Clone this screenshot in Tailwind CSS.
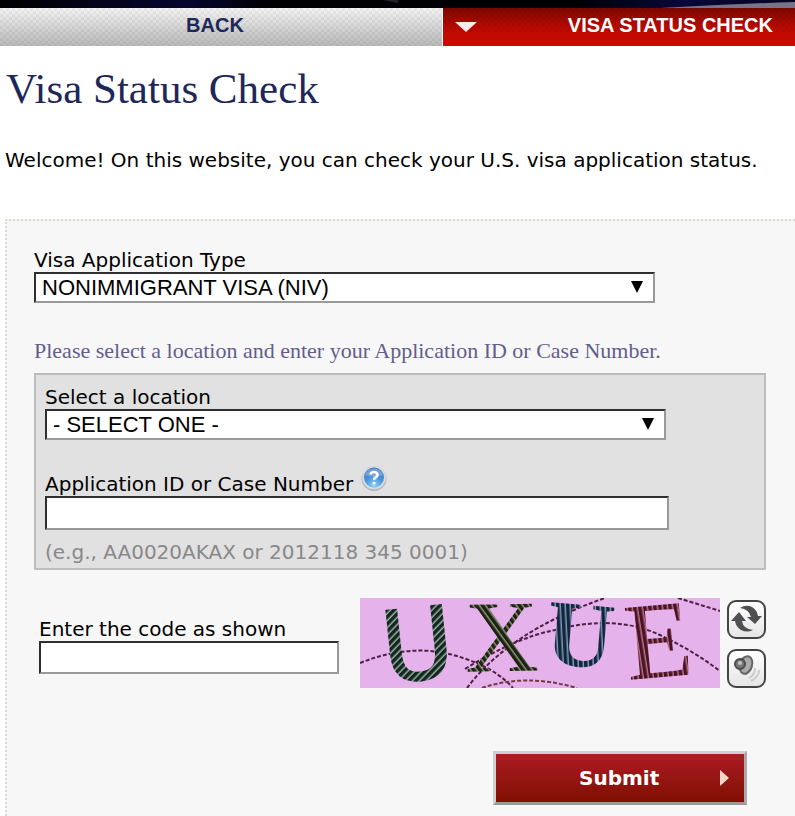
<!DOCTYPE html>
<html lang="en">
<head>
    <meta charset="UTF-8">
    <meta name="viewport" content="width=device-width, initial-scale=1.0">
    <title>Visa Status Check</title>
    <script src="https://cdn.jsdelivr.net/npm/@tailwindcss/browser@4"></script>
</head>
<body class="flex min-h-screen flex-col overflow-x-hidden bg-white font-['Verdana','DejaVu_Sans',sans-serif] text-[20px] leading-6 text-black">
    <header>
        <!-- bottom edge of the banner -->
        <svg class="block h-2 w-full" viewBox="0 0 795 8" preserveAspectRatio="none" aria-hidden="true">
            <defs>
                <linearGradient id="night">
                    <stop offset="0" stop-color="#000"/>
                    <stop offset=".12" stop-color="#03031a"/>
                    <stop offset=".24" stop-color="#050530"/>
                    <stop offset=".33" stop-color="#000005"/>
                    <stop offset=".72" stop-color="#000005"/>
                    <stop offset=".86" stop-color="#08083a"/>
                    <stop offset="1" stop-color="#050520"/>
                </linearGradient>
            </defs>
            <rect width="795" height="8" fill="url(#night)"/>
            <path d="M660 8Q730 4 795 2V8Z" fill="#77748a"/>
            <path d="M383 0H398V3Z" fill="#22262c"/>
        </svg>
        <nav class="grid grid-cols-[443fr_352fr] font-['Liberation_Sans',Arial,sans-serif] text-[20px] font-bold">
            <a href="#" class="relative block h-[38px] border-r border-white bg-linear-to-b from-[#f4f4f4] to-[#b9b9b9] pt-[5px] pr-3 text-center text-[#1d2758]">
                <svg class="absolute inset-0 h-full w-full" aria-hidden="true">
                    <defs>
                        <pattern id="mesh" width="6" height="6" patternUnits="userSpaceOnUse">
                            <path d="M0 0h3v3h3v3H3V3H0z" fill="#000" fill-opacity=".05"/>
                        </pattern>
                    </defs>
                    <rect width="100%" height="100%" fill="url(#mesh)"/>
                </svg>
                <span class="relative">BACK</span>
            </a>
            <a href="#" class="relative flex h-[38px] items-start justify-between bg-linear-to-b from-[#7d0800] via-[#b90a00] via-50% to-[#cc0a00] pt-[5px] pr-[22px] pl-3 text-white">
                <svg class="absolute inset-0 h-full w-full" aria-hidden="true"><rect width="100%" height="24" fill="url(#mesh)"/></svg>
                <svg class="relative mt-[9px] h-[10px] w-[22px]" viewBox="0 0 22 10" aria-hidden="true"><path d="M0 0H22L11 10Z" fill="#fff" fill-opacity=".92"/></svg>
                <span class="relative">VISA STATUS CHECK</span>
            </a>
        </nav>
    </header>

    <h1 class="mt-[18px] pl-[6px] font-['Liberation_Serif','Times_New_Roman',serif] text-[43px] leading-[50px] text-[#1d2758]">Visa Status Check</h1>
    <p class="mt-[34px] pl-[5px]">Welcome! On this website, you can check your U.S. visa application status.</p>

    <form class="mt-[47px] ml-[5px] flex-1 border-t-2 border-l-2 border-dotted border-[#dcdcd4] bg-[#f7f7f7] pt-[27px] pr-[29px] pb-[11px] pl-[27px]">
        <label for="visaType" class="block">Visa Application Type</label>
        <div class="relative w-[621px] max-w-full">
            <select id="visaType" class="block h-[31px] w-full appearance-none border-2 border-t-[#2f2f2f] border-r-[#999] border-b-[#999] border-l-[#2f2f2f] bg-white pl-[6px] font-['Liberation_Sans',Arial,sans-serif] text-[22px] leading-[26px]">
                <option>NONIMMIGRANT VISA (NIV)</option>
                <option>IMMIGRANT VISA (IV)</option>
            </select>
            <svg class="pointer-events-none absolute top-[9px] right-3 h-3 w-3" viewBox="0 0 12 12" aria-hidden="true"><path d="M0 0H12L6 12Z"/></svg>
        </div>

        <p class="mt-[34px] font-['Liberation_Serif','Times_New_Roman',serif] text-[22px] leading-7 text-[#625d8c]">Please select a location and enter your Application ID or Case Number.</p>

        <div class="mt-2 border-2 border-[#bdbdbd] bg-[#e1e1e1] px-[9px] pt-[10px] pb-1">
            <label for="location" class="block">Select a location</label>
            <div class="relative w-[621px] max-w-full">
                <select id="location" class="block h-[31px] w-full appearance-none border-2 border-t-[#2f2f2f] border-r-[#999] border-b-[#999] border-l-[#2f2f2f] bg-white pl-[6px] font-['Liberation_Sans',Arial,sans-serif] text-[22px] leading-[26px]">
                    <option>- SELECT ONE -</option>
                </select>
                <svg class="pointer-events-none absolute top-[9px] right-3 h-3 w-3" viewBox="0 0 12 12" aria-hidden="true"><path d="M0 0H12L6 12Z"/></svg>
            </div>

            <div class="mt-[25px] flex items-start gap-2">
                <label for="caseNumber" class="mt-[7px] block">Application ID or Case Number</label>
                <button type="button" aria-label="Help">
                    <svg class="block h-[26px] w-[26px]" viewBox="0 0 26 26" aria-hidden="true">
                        <defs>
                            <radialGradient id="ball" cx=".5" cy=".9" r=".9">
                                <stop offset="0" stop-color="#8fd0ff"/>
                                <stop offset=".5" stop-color="#4b92da"/>
                                <stop offset="1" stop-color="#4376bd"/>
                            </radialGradient>
                        </defs>
                        <circle cx="13" cy="13.5" r="12.5" fill="#aeb0b3"/>
                        <circle cx="13" cy="12.5" r="12" fill="#d5dadd"/>
                        <circle cx="13" cy="12.5" r="10" fill="url(#ball)"/>
                        <path d="M4 10A9.500 9.500 0 0 1 22 10Q13 13 4 10Z" fill="#fff" fill-opacity=".25"/>
                        <path d="M9.500 9.500Q10 7 13 7T16.500 9.800Q16.500 11.500 14.500 12.500Q13 13.300 13 14.800" fill="none" stroke="#fff" stroke-width="2.600"/>
                        <circle cx="13" cy="18" r="1.600" fill="#fff"/>
                    </svg>
                </button>
            </div>
            <input id="caseNumber" type="text" class="block h-[34px] w-[624px] max-w-full border-2 border-t-[#2f2f2f] border-r-[#999] border-b-[#999] border-l-[#2f2f2f] bg-white px-1">
            <p class="mt-[10px] text-[#888]">(e.g., AA0020AKAX or 2012118 345 0001)</p>
        </div>

        <div class="mt-7 flex items-start justify-between">
            <div class="ml-[5px] pt-[19px]">
                <label for="code" class="block">Enter the code as shown</label>
                <input id="code" type="text" class="block h-[33px] w-[300px] border-2 border-t-[#2f2f2f] border-r-[#999] border-b-[#999] border-l-[#2f2f2f] bg-white px-1">
            </div>
            <div class="flex gap-[7px]">
                <svg class="block h-[90px] w-[360px] overflow-visible" viewBox="0 0 360 90" role="img" aria-label="Security code">
                    <defs>
                        <pattern id="green" width="5" height="5" patternUnits="userSpaceOnUse" patternTransform="rotate(50)">
                            <rect width="5" height="5" fill="#96b5a5"/>
                            <rect width="3.500" height="5" fill="#15251f"/>
                        </pattern>
                        <pattern id="olive" width="5" height="5" patternUnits="userSpaceOnUse" patternTransform="rotate(-35)">
                            <rect width="5" height="5" fill="#8b9a68"/>
                            <rect width="3.500" height="5" fill="#1d2118"/>
                        </pattern>
                        <pattern id="blue" width="5" height="5" patternUnits="userSpaceOnUse" patternTransform="rotate(-8)">
                            <rect width="5" height="5" fill="#7c9cb8"/>
                            <rect width="3.500" height="5" fill="#14263e"/>
                        </pattern>
                        <pattern id="maroon" width="5" height="5" patternUnits="userSpaceOnUse" patternTransform="rotate(-4)">
                            <rect width="5" height="5" fill="#b77388"/>
                            <rect width="3.500" height="5" fill="#4a1425"/>
                        </pattern>
                        <clipPath id="frame"><rect width="360" height="90"/></clipPath>
                    </defs>
                    <rect width="360" height="90" fill="#e5b2ec"/>
                    <g fill="none" stroke="#4c2040" stroke-width="2" stroke-dasharray="4 2" clip-path="url(#frame)">
                        <path d="M0 65Q55 43 103 60Q135 70 153 90"/>
                        <path d="M107 90Q150 33 245 0"/>
                        <path d="M105 71Q155 40 195 32Q255 16 300 37Q332 52 360 73"/>
                        <path d="M318 0L360 13"/>
                        <path d="M122 90Q165 75 217 90" stroke="#753744"/>
                    </g>
                    <g font-family="Liberation Serif, Times New Roman, serif">
                        <text x="22" y="81" font-family="DejaVu Sans, sans-serif" font-size="98" fill="url(#green)" stroke="url(#green)" stroke-width="2" transform="rotate(-6 60 50)">U</text>
                        <text x="105" y="73" font-size="102" fill="url(#olive)" transform="rotate(-1 145 40)">X</text>
                        <text x="186" y="68" font-size="94" font-weight="bold" fill="url(#blue)" transform="rotate(5 217 40)">U</text>
                        <text x="265" y="79" font-size="110" fill="url(#maroon)" transform="rotate(-5 300 45)">E</text>
                    </g>
                </svg>
                <div class="flex flex-col gap-[10px] pt-[2px]">
                    <button type="button" aria-label="Refresh code" class="h-[39px] w-[39px] rounded-[9px] border-2 border-[#444] bg-linear-to-b from-white to-[#e6e6e6]">
                        <svg class="block h-[35px] w-[35px]" viewBox="0 0 35 35" fill="#505052" aria-hidden="true">
                            <path d="M11 6Q17 2 23 5Q28 8 29 14H33L26 22L18 15H22Q20 7 11 6Z"/>
                            <path d="M24 28Q18 31 12 28Q7 25 6 19H2L10 10L17 19H13Q14 27 24 28Z"/>
                        </svg>
                    </button>
                    <button type="button" aria-label="Play code" class="h-[39px] w-[39px] rounded-[9px] border-2 border-[#444] bg-linear-to-b from-white to-[#e6e6e6]">
                        <svg class="block h-[35px] w-[35px]" viewBox="0 0 35 35" fill="none" aria-hidden="true">
                            <path d="M7 9L18 5Q25 8 23 18L17 24L10 19Z" fill="#777"/>
                            <ellipse cx="17" cy="14" rx="6" ry="9" transform="rotate(18 17 14)" fill="#aaa" stroke="#666" stroke-width="2"/>
                            <circle cx="11" cy="13" r="5" fill="#777" stroke="#4c4c4c" stroke-width="2"/>
                            <circle cx="11" cy="12" r="2" fill="#c6c6c6"/>
                            <path d="M20 27Q26 24 26 17M22 30Q30 26 30 19" stroke="#ccc" stroke-width="2"/>
                        </svg>
                    </button>
                </div>
            </div>
        </div>

        <button type="submit" class="mt-[63px] mr-[19px] ml-auto flex h-[54px] w-[254px] items-center justify-between border-[3px] border-t-[#d0d0d0] border-r-[#a5aaaa] border-b-[#999] border-l-[#d0d0d0] bg-linear-to-b from-[#ad1c23] to-[#7f0f00] pr-[15px] pl-[83px] font-bold text-white">
            Submit
            <svg class="h-4 w-[9px]" viewBox="0 0 9 16" aria-hidden="true"><path d="M0 0L9 8L0 16Z" fill="#f0d8c5"/></svg>
        </button>
    </form>
</body>
</html>
